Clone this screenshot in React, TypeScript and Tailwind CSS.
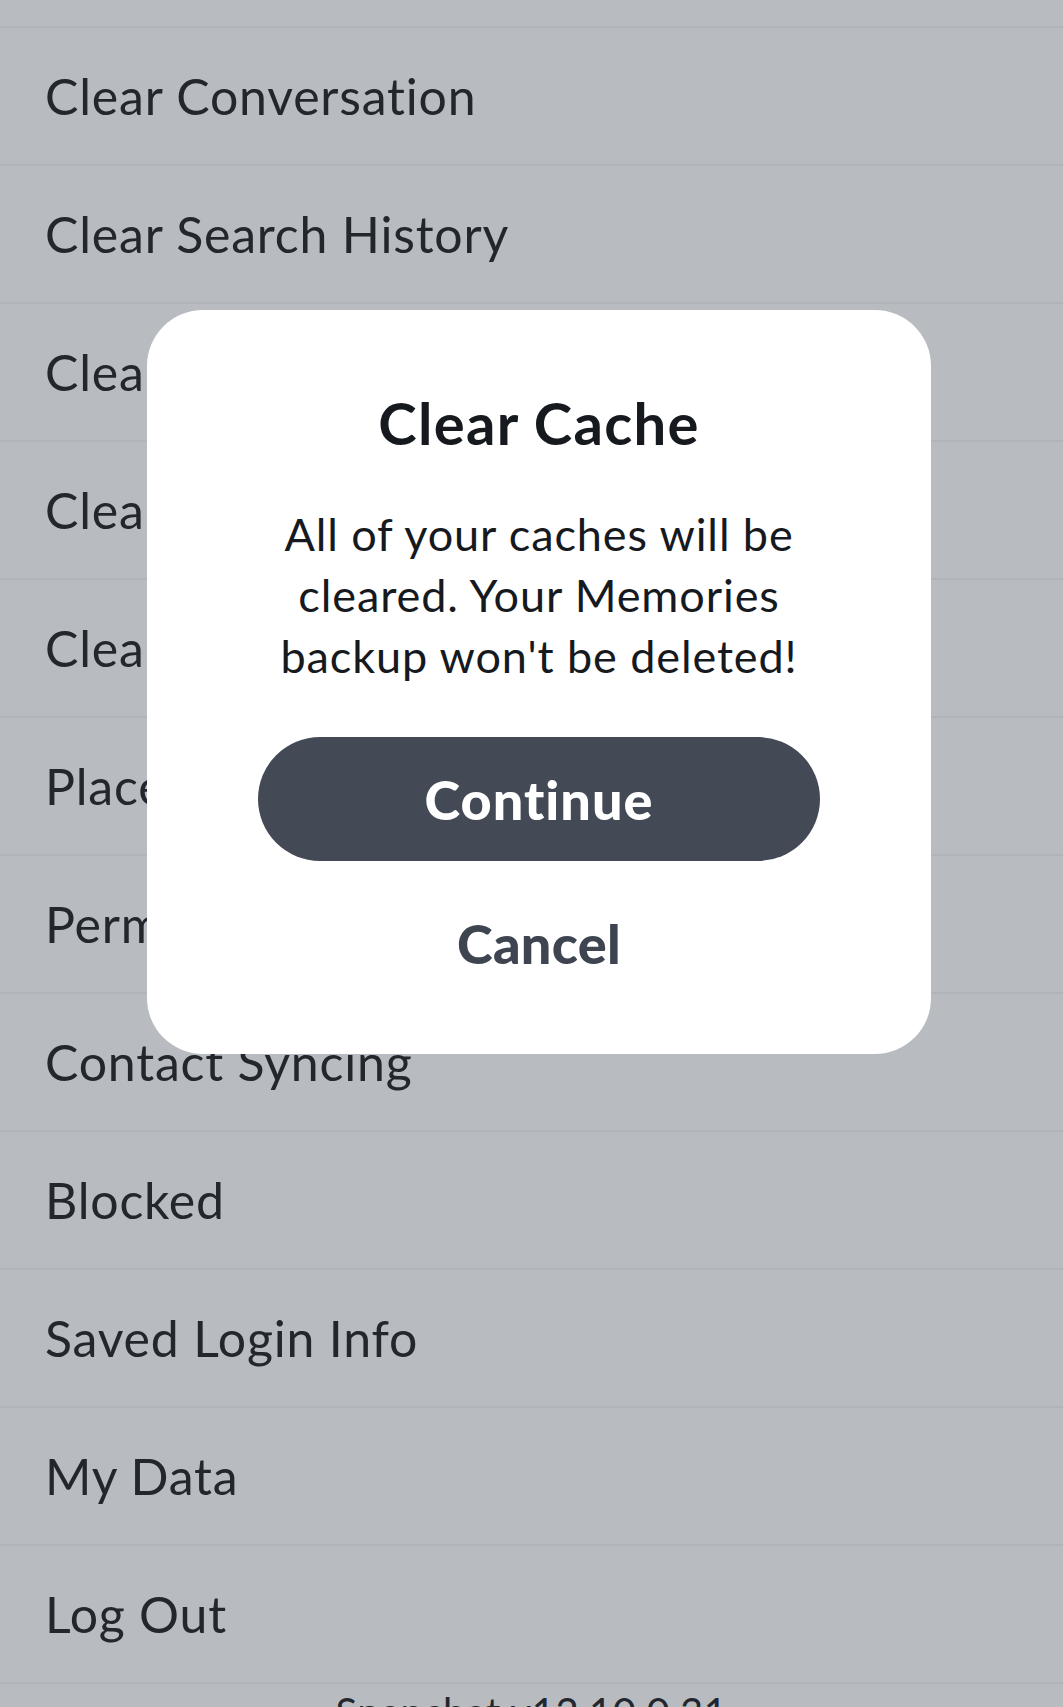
import React from "react";

const rows = [
	"Clear Conversation",
	"Clear Search History",
	"Clear Top Locations",
	"Clear Sticker Searches",
	"Clear Voice Scan History",
	"Places",
	"Permissions",
	"Contact Syncing",
	"Blocked",
	"Saved Login Info",
	"My Data",
	"Log Out",
];

const font = { fontFamily: "Lato, 'Open Sans', sans-serif" };

const ClearCacheDialog = () => (
	<div className="absolute left-[147px] top-[310px] w-[784px] h-[744px] rounded-[56px] bg-white flex flex-col items-center pt-[84px]">
		<h2 className="text-[58px] leading-none font-bold tracking-[1.3px] text-[#16191d]">Clear Cache</h2>
		<p className="mt-[52px] text-[45px] leading-[61px] tracking-[0.9px] text-center text-[#16191d] w-[620px]">
			All of your caches will be cleared. Your Memories backup won't be deleted!
		</p>
		<button className="mt-[50px] w-[562px] h-[124px] rounded-full bg-[#434a55] text-white text-[54px] tracking-[1px] font-black">
			Continue
		</button>
		<button className="mt-[56px] text-[54px] leading-none font-black tracking-[0.3px] text-[#3e4550]">Cancel</button>
	</div>
);

export default function App() {
	return (
		<div style={font} className="relative w-[1063px] h-[1707px] overflow-hidden bg-[#b8bbc0] text-[#23272d]">
			<div className="h-[28px] border-b-2 border-[#b0b3b8]" />
			{rows.map((r) => (
				<div key={r} className="h-[138px] border-b-2 border-[#b0b3b8] flex items-center pl-[45px]">
					<span className="text-[50px] leading-none tracking-[0.8px] whitespace-nowrap">{r}</span>
				</div>
			))}
			<div className="pt-[8px] text-center text-[40px] leading-none tracking-[0.5px] text-[#23272d]">Snapchat v12.10.0.31</div>
			<ClearCacheDialog />
		</div>
	);
}
